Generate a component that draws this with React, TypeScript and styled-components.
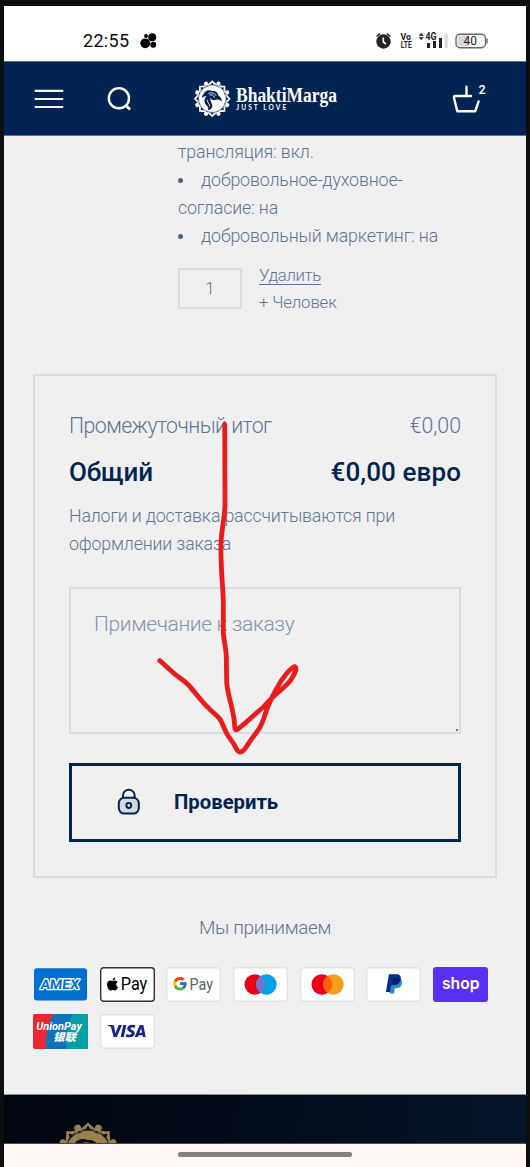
import React from "react";
import styled, { createGlobalStyle } from "styled-components";
import { FaApple } from "react-icons/fa";
import { FcGoogle } from "react-icons/fc";
import { SiVisa } from "react-icons/si";

const navy = "#012453";
const slate = "#5f7491";

const GlobalStyle = createGlobalStyle`
  * { box-sizing: border-box; }
  body { margin: 0; background: #0e0e0e; font-family: Roboto, "Noto Sans", sans-serif; }
`;

const Frame = styled.div`
  position: relative;
  width: 530px;
  height: 1167px;
  padding: 6px 4px 0;
  overflow: hidden;
  background: #0e0e0e;
`;
const Screen = styled.div`
  height: 1161px;
  display: flex;
  flex-direction: column;
  background: #f0f0f0;
`;
const StatusBar = styled.div`
  height: 55px;
  flex: none;
  display: flex;
  align-items: center;
  padding: 15px 38px 0 79px;
  background: #fff;
`;
const Clock = styled.span`
  font: 400 18px/20px Roboto, sans-serif;
  letter-spacing: 0.3px;
  color: #111;
  width: 57px;
  white-space: nowrap;
`;
const StatusIcons = styled.svg`
  margin-left: auto;
  display: block;
`;
const Header = styled.header`
  height: 75px;
  flex: none;
  display: flex;
  align-items: center;
  padding: 0 38px 0 30px;
  background: ${navy};
  border-top: 1px solid #5d7591;
  border-bottom: 1px solid #5d7591;
`;
const HeaderIcon = styled.svg<{ $left?: number }>`
  display: block;
  flex: none;
  overflow: visible;
  margin-left: ${(p) => p.$left ?? 0}px;
`;
const Main = styled.main`
  height: 958px;
  flex: none;
  display: flex;
  flex-direction: column;
  padding: 2px 29px 0;
`;
const Item = styled.section`
  margin-left: 145px;
`;
const Props = styled.ul`
  list-style: none;
  margin: 0;
  padding: 0;
  color: ${slate};
  font-size: 17.8px;
  font-weight: 300;
  line-height: 28px;
  letter-spacing: -0.14px;
`;
const Prop = styled.li<{ $bullet?: boolean }>`
  white-space: pre-line;
  &::before {
    content: "";
    display: ${(p) => (p.$bullet ? "inline-block" : "none")};
    width: 5px;
    height: 5px;
    border-radius: 50%;
    background: #46648a;
    margin-right: 18px;
    vertical-align: 3px;
  }
`;
const Controls = styled.div`
  display: flex;
  gap: 17px;
  margin-top: 11px;
`;
const Quantity = styled.div`
  width: 64px;
  height: 41px;
  margin-top: 7px;
  padding-bottom: 2px;
  border: 2px solid #dadce3;
  display: flex;
  align-items: center;
  justify-content: center;
  font-size: 17px;
  font-weight: 300;
  color: ${slate};
`;
const Actions = styled.div`
  display: flex;
  flex-direction: column;
  align-items: flex-start;
  font-size: 16.8px;
  font-weight: 300;
  letter-spacing: -0.35px;
  color: ${slate};
`;
const Remove = styled.a`
  line-height: 18px;
  margin-top: 5px;
  border-bottom: 1.5px solid ${slate};
`;
const Person = styled.span`
  line-height: 20px;
  margin-top: 7px;
  letter-spacing: -0.15px;
`;
const Summary = styled.section`
  margin-top: 62px;
  width: 464px;
  height: 504px;
  padding: 36px 34px 0;
  border: 2px solid #dadce3;
  display: flex;
  flex-direction: column;
`;
const Row = styled.div`
  display: flex;
  justify-content: space-between;
  font-size: 21.3px;
  font-weight: 300;
  line-height: 28px;
  color: ${slate};
`;
const SubtotalLabel = styled.span`
  letter-spacing: -0.56px;
`;
const TotalRow = styled(Row)`
  font-size: 26px;
  font-weight: 500;
  line-height: 34px;
  letter-spacing: -0.1px;
  margin-top: 15px;
  color: ${navy};
`;
const TotalPrice = styled.span`
  letter-spacing: 0.1px;
`;
const Note = styled.p`
  margin: 13px 0 0;
  font-size: 17.8px;
  font-weight: 300;
  line-height: 28px;
  letter-spacing: -0.17px;
  color: ${slate};
  white-space: pre-line;
`;
const NoteField = styled.div`
  height: 147px;
  margin-top: 29px;
  padding: 21px 23px;
  border: 2px solid #dadce3;
  display: flex;
  justify-content: space-between;
  font-size: 21px;
  font-weight: 300;
  line-height: 28px;
  letter-spacing: -0.37px;
  color: #8593aa;
`;
const Grip = styled.i`
  align-self: flex-end;
  width: 2px;
  height: 2px;
  margin: 0 -22px -20px 0;
  background: #777;
`;
const Checkout = styled.button`
  height: 79px;
  margin-top: 29px;
  padding: 0 45px 1px;
  display: flex;
  align-items: center;
  gap: 33px;
  border: 3px solid ${navy};
  background: transparent;
  font: 700 20.3px/28px Roboto, sans-serif;
  color: ${navy};
`;
const Accept = styled.div`
  margin-top: 36px;
  text-align: center;
  font-size: 19px;
  font-weight: 300;
  line-height: 28px;
  letter-spacing: -0.35px;
  color: ${slate};
`;
const Payments = styled.div`
  display: grid;
  grid-template-columns: repeat(7, 55px);
  column-gap: 11.7px;
  row-gap: 11.5px;
  margin-top: 25px;
`;
const Pay = styled.svg`
  display: block;
  width: 55px;
  height: 35px;
`;
const Footer = styled.footer`
  height: 50px;
  flex: none;
  padding: 26px 0 0 52px;
  overflow: hidden;
  border-top: 1px solid #87939b;
  border-bottom: 1px solid #4c4850;
  background: linear-gradient(100deg, #01060f, #030c1a 50%, #06142a);
`;
const NavArea = styled.div`
  flex: 1;
  display: flex;
  justify-content: center;
  padding-top: 8px;
  background: #fff7f5;
`;
const HomeBar = styled.div`
  width: 174px;
  height: 4.5px;
  border-radius: 2px;
  background: #858080;
`;
const Annotation = styled.svg`
  position: absolute;
  left: 150px;
  top: 415px;
  pointer-events: none;
`;
const EmblemSvg = styled.svg`
  display: block;
  flex: none;
`;

function Emblem({ size, color, hole }: { size: number; color: string; hole: string }) {
  const steps = [0, 1, 2, 3, 4, 5, 6, 7];
  return (
    <EmblemSvg width={size} height={size} viewBox="-20 -20 40 40">
      {steps.map((i) => (
        <g key={i} transform={`rotate(${i * 45})`}>
          <path d="M0 -19.4 C-1 -17.4 -4.4 -16.5 -5.3 -13 L5.3 -13 C4.4 -16.5 1 -17.4 0 -19.4Z" fill={color} />
          <path d="M0 -17 L-1.5 -14.9 L0 -14 L1.5 -14.9Z" fill={hole} />
          <path d="M-3.4 -14.4 L-1 -14.8 M3.4 -14.4 L1 -14.8" stroke={hole} strokeWidth="0.5" />
          <circle cx="0" cy="-16.8" r="2.2" fill={color} transform="rotate(22.5)" />
        </g>
      ))}
      <circle r="14.3" fill="none" stroke={hole} strokeWidth="0.5" />
      <circle r="13.6" fill={color} />
      <path
        d="M-9 -5 C-7 -9 -3 -9.5 0 -8 C3 -8.8 6 -6.5 6.5 -3.5 C8.5 -2 10.5 1 9.8 3.2 C8.5 1 6 .5 4 1 C1 2 -1 1 -2 -1 C-2.5 3 1 5.5 0 8.5 C-.8 10.5 -2.5 11.5 -4.5 11.8 C-2.8 8.5 -6.5 7.5 -7.8 4 C-8.8 1 -7.2 -1 -6 -2.5 C-7.5 -2.8 -9.2 -2.2 -10.5 -.8 C-10.8 -3 -9.8 -4 -9 -5Z"
        fill={hole}
      />
      <path d="M-4 -5.5 C-1 -7 2.5 -6 4 -3 M-3 -3.8 C-.5 -4.8 1.5 -3.5 2.5 -1.2 M-5.5 1 C-5 4 -3 5 -2.5 8" fill="none" stroke={color} strokeWidth="0.9" />
    </EmblemSvg>
  );
}

const PayPlate = ({ stroke = "#e3e3e4", fill = "#fff" }: { stroke?: string; fill?: string }) => (
  <rect x="0.7" y="0.7" width="53.6" height="33.6" rx="3" fill={fill} stroke={stroke} strokeWidth="1.4" />
);

export default function App() {
  return (
    <Frame>
      <GlobalStyle />
      <Screen>
        <StatusBar>
          <Clock>22:55</Clock>
          <svg width="17" height="16" viewBox="0 0 17 16">
            <circle cx="5.2" cy="10.3" r="4.9" />
            <circle cx="12.2" cy="4.3" r="4" />
            <circle cx="13.2" cy="11.8" r="3" />
            <circle cx="6" cy="3" r="1.9" />
          </svg>
          <StatusIcons width="114" height="18" viewBox="374 32 114 18">
            <g fill="#222">
              <circle cx="383.5" cy="41.5" r="7.2" />
              <path d="M383.3 37.5 V42 L386 44" stroke="#fff" strokeWidth="1.6" fill="none" />
              <path d="M376.5 36.5 L380 33.7 M387 33.7 L390.5 36.5" stroke="#222" strokeWidth="1.5" />
              <g fontFamily="Roboto, sans-serif" fontWeight="700">
                <text x="400.5" y="40" fontSize="9" textLength="10.5" lengthAdjust="spacingAndGlyphs">Vo</text>
                <text x="400.8" y="48" fontSize="9.5" textLength="11" lengthAdjust="spacingAndGlyphs">LTE</text>
                <text x="425.5" y="40" fontSize="10" textLength="11" lengthAdjust="spacingAndGlyphs">4G</text>
              </g>
              <path d="M418.5 35.8 L421.2 33 L424 35.8Z M418.5 37.3 L421.2 40 L424 37.3Z" />
              <rect x="427" y="43" width="3" height="5" />
              <rect x="433" y="41" width="3" height="7" />
              <rect x="439" y="38" width="3" height="10" />
            </g>
            <rect x="444.6" y="33.5" width="3" height="14.5" fill="#d8d8d8" />
            <rect x="456" y="34.2" width="29.5" height="13.6" rx="4" fill="#fff" stroke="#666" strokeWidth="1.4" />
            <path d="M460 35.5 h8 v11 h-8 a2.5 2.5 0 0 1 -2.5 -2.5 v-6 a2.5 2.5 0 0 1 2.5 -2.5Z" fill="#d7d7d7" />
            <path d="M487 38.5 v5" stroke="#777" strokeWidth="1.6" />
            <text x="463.5" y="45.4" fontSize="12" fontFamily="Roboto, sans-serif" fill="#222" textLength="13.4">40</text>
          </StatusIcons>
        </StatusBar>

        <Header>
          <HeaderIcon width="30" height="22" viewBox="0 0 30 22" stroke="#fff" strokeWidth="2.2" strokeLinecap="round">
            <path d="M1.6 2.9 H28.4 M1.6 11 H28.4 M1.6 19 H28.4" />
          </HeaderIcon>
          <HeaderIcon $left={43} width="26" height="26" viewBox="0 0 26 26" fill="none" stroke="#fff" strokeWidth="2.4">
            <circle cx="11.9" cy="12.2" r="10.1" />
            <path d="M18.8 19.3 L23 23.4" strokeWidth="2.8" />
          </HeaderIcon>
          <HeaderIcon $left={59} width="146" height="40" viewBox="192 79 146 40" fill="#fff">
            <svg x="193" y="79.5" width="38.5" height="38.5">
              <Emblem size={38.5} color="#fff" hole={navy} />
            </svg>
            <text x="236" y="101.8" fontFamily='"Liberation Serif", serif' fontWeight="700" fontSize="20.5" textLength="101" lengthAdjust="spacingAndGlyphs">
              BhaktiMarga
            </text>
            <text x="236.3" y="110.4" fontFamily="Lato, sans-serif" fontWeight="700" fontSize="6.6" textLength="50">
              JUST LOVE
            </text>
          </HeaderIcon>
          <HeaderIcon $left={114} width="36" height="30" viewBox="452 82 36 30" fill="none" stroke="#fff" strokeWidth="2.4" strokeLinejoin="round" strokeLinecap="round">
            <path d="M466.5 84.8 V93.6 M471 94 H455.3 Q453.5 94 454 96 L457.3 109.2 H475.3 L478.6 99.5" />
            <text x="478.6" y="92.2" fontSize="12.5" fontWeight="500" fontFamily="Roboto, sans-serif" fill="#fff" stroke="none">2</text>
          </HeaderIcon>
        </Header>

        <Main>
          <Item>
            <Props>
              <Prop>трансляция: вкл.</Prop>
              <Prop $bullet>{"добровольное-духовное-\nсогласие: на"}</Prop>
              <Prop $bullet>добровольный маркетинг: на</Prop>
            </Props>
            <Controls>
              <Quantity>1</Quantity>
              <Actions>
                <Remove>Удалить</Remove>
                <Person>+ Человек</Person>
              </Actions>
            </Controls>
          </Item>

          <Summary>
            <Row>
              <SubtotalLabel>Промежуточный итог</SubtotalLabel>
              <span>€0,00</span>
            </Row>
            <TotalRow>
              <span>Общий</span>
              <TotalPrice>€0,00 евро</TotalPrice>
            </TotalRow>
            <Note>{"Налоги и доставка рассчитываются при\nоформлении заказа"}</Note>
            <NoteField>
              Примечание к заказу
              <Grip />
            </NoteField>
            <Checkout>
              <svg width="24" height="28" viewBox="0 0 24 28" fill="none" stroke={navy} strokeWidth="2">
                <path d="M6 10 V7.5 a5.8 5.8 0 0 1 11.6 0 V10" />
                <rect x="1.8" y="9.8" width="20" height="15.8" rx="5.5" fill="#d3dae2" />
                <circle cx="11.8" cy="17.5" r="2.4" fill="#f0f0f0" />
              </svg>
              Проверить
            </Checkout>
          </Summary>

          <Accept>Мы принимаем</Accept>
          <Payments>
            <Pay viewBox="0 0 55 35">
              <rect x="1" y="1.2" width="53" height="32.3" rx="3" fill="#016fd0" />
              <text x="7.5" y="22.3" transform="skewX(-6) translate(2 0)" fontFamily="Roboto, sans-serif" fontWeight="700" fontSize="13.5" fill="#016fd0" stroke="#fff" strokeWidth="2.6" strokeLinejoin="round" paintOrder="stroke" textLength="38.5" lengthAdjust="spacingAndGlyphs">AMEX</text>
            </Pay>
            <Pay viewBox="0 0 55 35">
              <PayPlate stroke="#333" />
              <FaApple x="5" y="9.5" size={15} />
              <text x="20.8" y="23.4" fontFamily="Roboto, sans-serif" fontSize="17.5" fontWeight="400" textLength="26.5" lengthAdjust="spacingAndGlyphs">Pay</text>
            </Pay>
            <Pay viewBox="0 0 55 35">
              <PayPlate />
              <FcGoogle x="6" y="8.7" size={16} />
              <text x="23.5" y="22.7" fontFamily="Roboto, sans-serif" fontSize="16.5" fill="#5f6368" textLength="23.5" lengthAdjust="spacingAndGlyphs">Pay</text>
            </Pay>
            <Pay viewBox="0 0 55 35">
              <PayPlate />
              <circle cx="21.8" cy="17.5" r="10.3" fill="#eb001b" />
              <circle cx="33.4" cy="17.5" r="10.3" fill="#00a2e5" />
              <path d="M27.6 9 a10.3 10.3 0 0 1 0 17 a10.3 10.3 0 0 1 0 -17Z" fill="#7375cf" />
            </Pay>
            <Pay viewBox="0 0 55 35">
              <PayPlate />
              <circle cx="21.8" cy="17.5" r="10.3" fill="#eb001b" />
              <circle cx="33.4" cy="17.5" r="10.3" fill="#f79e1b" />
              <path d="M27.6 9 a10.3 10.3 0 0 1 0 17 a10.3 10.3 0 0 1 0 -17Z" fill="#ff5f00" />
            </Pay>
            <Pay viewBox="0 0 55 35">
              <PayPlate />
              <path d="M25.5 12 H34 C36 13 36.4 15 35.7 17.5 C35 20.3 32.7 21.3 30 21.3 H28.8 L27.8 26.5 H23.5Z" fill="#3086c8" />
              <path d="M22.9 7.3 H30.5 C34.4 7.3 35.4 10 34.6 13 C33.8 16.5 31 18 27.8 18 H25.3 L24 25 H19.9Z" fill="#003087" />
              <path d="M27 11.8 C27.2 11 27.6 10.9 28.3 10.9 H33 Q34.5 11 34.7 12 C34 16.5 31 18 27.8 18 H25.8Z" fill="#012169" />
            </Pay>
            <Pay viewBox="0 0 55 35">
              <rect width="55" height="35" rx="3" fill="#5a31f4" />
              <text x="9" y="22" fontFamily="Inter, sans-serif" fontWeight="600" fontSize="16.5" fill="#fff" textLength="37.5" lengthAdjust="spacingAndGlyphs">shop</text>
            </Pay>
            <Pay viewBox="0 0 55 35">
              <rect width="55" height="35" rx="2" fill="#e9292f" />
              <path d="M20.5 0 H53 a2 2 0 0 1 2 2 V33 a2 2 0 0 1 -2 2 H13 C11.5 24 16 8 20.5 0Z" fill="#0f72ba" />
              <path d="M40 0 H53 a2 2 0 0 1 2 2 V33 a2 2 0 0 1 -2 2 H33.5 C31.5 24 35 8 40 0Z" fill="#069fa4" />
              <g fill="#fff" fontStyle="italic" fontWeight="700">
                <text x="3.3" y="16" fontFamily="Roboto, sans-serif" fontSize="11.3" textLength="45.5" lengthAdjust="spacingAndGlyphs">UnionPay</text>
                <text x="20" y="26.8" fontFamily='"Noto Sans CJK SC", sans-serif' fontSize="10.8" fontWeight="900" textLength="23" lengthAdjust="spacingAndGlyphs">银联</text>
              </g>
            </Pay>
            <Pay viewBox="0 0 55 35">
              <PayPlate />
              <SiVisa x="7.3" y="-2.2" size={38.5} color="#142688" />
            </Pay>
          </Payments>
        </Main>

        <Footer>
          <Emblem size={64} color="#99804f" hole="#030a17" />
        </Footer>
        <NavArea>
          <HomeBar />
        </NavArea>
      </Screen>

      <Annotation width="160" height="345" viewBox="150 415 160 345" fill="none" stroke="#ea1b1b" strokeWidth="4.8" strokeLinecap="round" strokeLinejoin="round">
        <path d="M224.7 424.5 L225 505 C224.5 520 220.7 532 220.9 548 C221 575 223.3 590 223.3 603 L223.3 633 C224 643 226.3 648 226.3 657 L226.7 683 C228 697 234 711 234.5 724 C234.6 729 235 731 238 729 C248 721 256 713 263.5 707 C267 703 271 699 275 695 C283 688 289 684 292 678 C295 673 297.5 668 294.8 666.5 C290 668 281 680 277 688 C271 699 267 708 266 712 C264 718 262 724 259.5 728 C256 734 251 739 248.5 743.5 C246 747 244 752 240 752 C236.5 752 236 747 233.5 743.5 C231 740 228.5 737 226.5 733 C224 728 222 722 219.5 718.5 C216 714.5 212 712 208.5 708 C201 701 195 692 188.5 685 C183.5 680 178 677 173.5 673 L159.7 660.5" />
      </Annotation>
    </Frame>
  );
}
